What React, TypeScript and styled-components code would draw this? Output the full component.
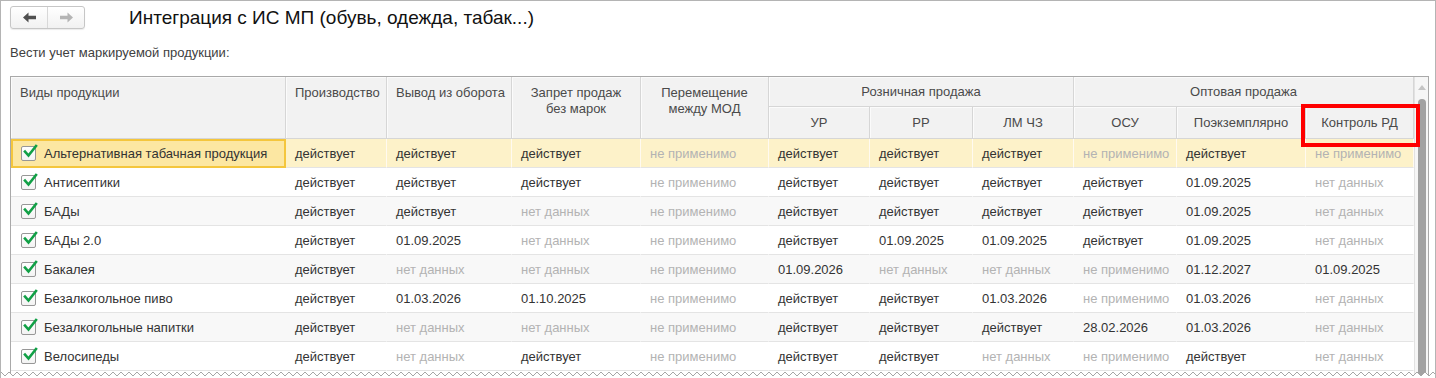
import styled, { createGlobalStyle } from 'styled-components';

const GlobalStyle = createGlobalStyle`
    html, body {
        margin: 0;
        padding: 0;
        background: #ffffff;
    }
    body {
        font-family: "Liberation Sans", Arial, sans-serif;
        color: #333333;
    }
`;

const Window = styled.div`
    position: relative;
    width: 1436px;
    height: 378px;
    box-sizing: border-box;
    border: 1px solid #b4b4b4;
    border-bottom: none;
    overflow: hidden;
    background: #ffffff;
`;

const TopBar = styled.div`
    display: flex;
    align-items: center;
    padding: 5px 0 0 9px;
`;

const NavGroup = styled.div`
    display: flex;
    height: 23px;
    box-sizing: border-box;
    border: 1px solid #c6c6c6;
    border-radius: 3px;
    background: linear-gradient(#ffffff, #f1f1f1);
    box-shadow: 0 1px 1px rgba(0, 0, 0, 0.08);
`;

const NavButton = styled.div<{ $first?: boolean }>`
    width: 36px;
    display: flex;
    align-items: center;
    justify-content: center;
    border-right: ${p => (p.$first ? '1px solid #d8d8d8' : 'none')};
`;

const Title = styled.h1`
    margin: 0 0 0 44px;
    font-size: 19px;
    font-weight: normal;
    color: #111111;
    line-height: 22px;
`;

const Caption = styled.div`
    margin: 16px 0 0 9px;
    font-size: 13px;
    line-height: 16px;
    color: #404040;
`;

const TableFrame = styled.div`
    display: flex;
    margin: 15px 0 0 9px;
    width: 1419px;
    height: 320px;
    box-sizing: border-box;
    border: 1px solid #a9a9a9;
    border-bottom: none;
`;

const Grid = styled.table`
    table-layout: fixed;
    width: 1403px;
    height: fit-content;
    border-collapse: separate;
    border-spacing: 0;
    font-size: 13px;
`;

const HeadRow = styled.tr<{ $h: number }>`
    height: ${p => p.$h}px;
`;

const HeadCell = styled.th<{ $align?: string; $top?: boolean }>`
    padding: ${p => (p.$top ? '8px 9px 0' : '0 9px')};
    vertical-align: ${p => (p.$top ? 'top' : 'middle')};
    text-align: ${p => p.$align ?? 'center'};
    font-weight: normal;
    color: #4a4a4a;
    line-height: 16px;
    background: #f2f2f2;
    border-right: 1px solid #d6d6d6;
    border-bottom: 1px solid #d6d6d6;
    box-shadow: inset 1px 1px 0 #fbfbfb;
    white-space: nowrap;
    overflow: hidden;
`;

const Row = styled.tr<{ $tone: 'sel' | 'odd' | 'even' }>`
    height: 29px;
    background: ${p => (p.$tone === 'sel' ? '#fdf2c9' : p.$tone === 'odd' ? '#f8f8f8' : '#ffffff')};
`;

const Cell = styled.td<{ $muted?: boolean; $sel?: boolean }>`
    padding: 0 9px;
    line-height: 15px;
    border-bottom: 1px solid #e4e4e4;
    border-right: 1px solid ${p => (p.$sel ? '#fffaf0' : 'transparent')};
    color: ${p => (p.$muted ? '#b3b3b3' : '#333333')};
    white-space: nowrap;
    overflow: hidden;
`;

const NameCell = styled.td<{ $current?: boolean }>`
    padding: 0 0 0 ${p => (p.$current ? '8px' : '10px')};
    line-height: 15px;
    border: ${p => (p.$current ? '2px solid #f4c63d' : 'none')};
    border-bottom: ${p => (p.$current ? '2px solid #f4c63d' : '1px solid #e4e4e4')};
    background: ${p => (p.$current ? '#fce7a2' : 'transparent')};
    white-space: nowrap;
    overflow: hidden;
`;

const NameBox = styled.div`
    display: flex;
    align-items: center;
    gap: 8px;
    color: #333333;
`;

const CheckBox = styled.span`
    width: 15px;
    height: 15px;
    box-sizing: border-box;
    border: 1px solid #979797;
    border-radius: 2px;
    background: linear-gradient(#ffffff, #f3f3f3);
    position: relative;
    flex: none;
`;

const Scroller = styled.div`
    flex: 1;
    position: relative;
    background: #f6f6f6;
    border-left: 1px solid #e2e2e2;
`;

const ScrollArrow = styled.div`
    width: 0;
    height: 0;
    margin: 8px auto 0;
    border-left: 4px solid transparent;
    border-right: 4px solid transparent;
    border-bottom: 5px solid #c4c4c4;
`;

const ScrollThumb = styled.div`
    width: 8px;
    height: 300px;
    margin: 9px auto 0;
    border-radius: 4px;
    background: #a2a2a2;
`;

const Highlight = styled.div`
    position: absolute;
    left: 1300px;
    top: 103px;
    width: 119px;
    height: 43px;
    box-sizing: border-box;
    border: 4px solid #ff0000;
    pointer-events: none;
`;

const TornEdge = styled.svg`
    position: absolute;
    left: 0;
    bottom: 0;
`;

const rows: { name: string; values: string[] }[] = [
    { name: 'Альтернативная табачная продукция', values: ['действует', 'действует', 'действует', 'не применимо', 'действует', 'действует', 'действует', 'не применимо', 'действует', 'не применимо'] },
    { name: 'Антисептики', values: ['действует', 'действует', 'действует', 'не применимо', 'действует', 'действует', 'действует', 'действует', '01.09.2025', 'нет данных'] },
    { name: 'БАДы', values: ['действует', 'действует', 'нет данных', 'не применимо', 'действует', 'действует', 'действует', 'действует', '01.09.2025', 'нет данных'] },
    { name: 'БАДы 2.0', values: ['действует', '01.09.2025', 'нет данных', 'не применимо', 'действует', '01.09.2025', '01.09.2025', 'действует', '01.09.2025', 'нет данных'] },
    { name: 'Бакалея', values: ['действует', 'нет данных', 'нет данных', 'не применимо', '01.09.2026', 'нет данных', 'нет данных', 'не применимо', '01.12.2027', '01.09.2025'] },
    { name: 'Безалкогольное пиво', values: ['действует', '01.03.2026', '01.10.2025', 'не применимо', 'действует', 'действует', '01.03.2026', 'не применимо', '01.03.2026', 'нет данных'] },
    { name: 'Безалкогольные напитки', values: ['действует', 'нет данных', 'нет данных', 'не применимо', 'действует', 'действует', 'действует', '28.02.2026', '01.03.2026', 'нет данных'] },
    { name: 'Велосипеды', values: ['действует', 'нет данных', 'действует', 'не применимо', 'действует', 'действует', 'нет данных', 'не применимо', 'действует', 'нет данных'] },
];

const widths = [275, 101, 125, 129, 128, 101, 103, 101, 103, 129, 108];

const isMuted = (v: string) => v === 'не применимо' || v === 'нет данных';

const Arrow = ({ dir, color }: { dir: 'left' | 'right'; color: string }) => (
    <svg width="13" height="11" viewBox="0 0 13 11">
        <path
            d={dir === 'left' ? 'M0 5.5 L5.5 0.5 L5.5 3.8 L13 3.8 L13 7.2 L5.5 7.2 L5.5 10.5 Z' : 'M13 5.5 L7.5 0.5 L7.5 3.8 L0 3.8 L0 7.2 L7.5 7.2 L7.5 10.5 Z'}
            fill={color}
        />
    </svg>
);

const Check = () => (
    <svg width="15" height="15" viewBox="0 0 15 15" style={{ position: 'absolute', left: 1, top: -3 }}>
        <path d="M2 7.5 L5.5 11.5 L13 2" fill="none" stroke="#11a046" strokeWidth="2.6" strokeLinecap="square" />
    </svg>
);

const zigzag = () => {
    let d = 'M0 3';
    for (let x = 0; x <= 1440; x += 8) {
        d += ` L${x + 4} 7 L${x + 8} 3`;
    }
    return d;
};

export default function App() {
    const edge = zigzag();
    return (
        <>
            <GlobalStyle />
            <Window>
                <TopBar>
                    <NavGroup>
                        <NavButton $first>
                            <Arrow dir="left" color="#4f4f4f" />
                        </NavButton>
                        <NavButton>
                            <Arrow dir="right" color="#b4b4b4" />
                        </NavButton>
                    </NavGroup>
                    <Title>Интеграция с ИС МП (обувь, одежда, табак...)</Title>
                </TopBar>
                <Caption>Вести учет маркируемой продукции:</Caption>
                <TableFrame>
                    <Grid>
                        <colgroup>
                            {widths.map((w, i) => (
                                <col key={i} style={{ width: w }} />
                            ))}
                        </colgroup>
                        <thead>
                            <HeadRow $h={30}>
                                <HeadCell rowSpan={2} $top $align="left">Виды продукции</HeadCell>
                                <HeadCell rowSpan={2} $top $align="left">Производство</HeadCell>
                                <HeadCell rowSpan={2} $top $align="left">Вывод из оборота</HeadCell>
                                <HeadCell rowSpan={2} $top>Запрет продаж<br />без марок</HeadCell>
                                <HeadCell rowSpan={2} $top>Перемещение<br />между МОД</HeadCell>
                                <HeadCell colSpan={3}>Розничная продажа</HeadCell>
                                <HeadCell colSpan={3}>Оптовая продажа</HeadCell>
                            </HeadRow>
                            <HeadRow $h={32}>
                                <HeadCell>УР</HeadCell>
                                <HeadCell>РР</HeadCell>
                                <HeadCell>ЛМ ЧЗ</HeadCell>
                                <HeadCell>ОСУ</HeadCell>
                                <HeadCell>Поэкземплярно</HeadCell>
                                <HeadCell>Контроль РД</HeadCell>
                            </HeadRow>
                        </thead>
                        <tbody>
                            {rows.map((r, i) => {
                                const tone = i === 0 ? 'sel' : i % 2 === 0 ? 'odd' : 'even';
                                return (
                                    <Row key={r.name} $tone={tone}>
                                        <NameCell $current={i === 0}>
                                            <NameBox>
                                                <CheckBox>
                                                    <Check />
                                                </CheckBox>
                                                {r.name}
                                            </NameBox>
                                        </NameCell>
                                        {r.values.map((v, j) => (
                                            <Cell key={j} $muted={isMuted(v)} $sel={i === 0}>
                                                {v}
                                            </Cell>
                                        ))}
                                    </Row>
                                );
                            })}
                        </tbody>
                    </Grid>
                    <Scroller>
                        <ScrollArrow />
                        <ScrollThumb />
                    </Scroller>
                </TableFrame>
                <Highlight />
                <TornEdge width="1436" height="9" viewBox="0 0 1436 9">
                    <path d={`${edge} L1440 9 L0 9 Z`} fill="#ffffff" />
                    <path d={edge} fill="none" stroke="#a6a6a6" strokeWidth="1" />
                </TornEdge>
            </Window>
        </>
    );
}
